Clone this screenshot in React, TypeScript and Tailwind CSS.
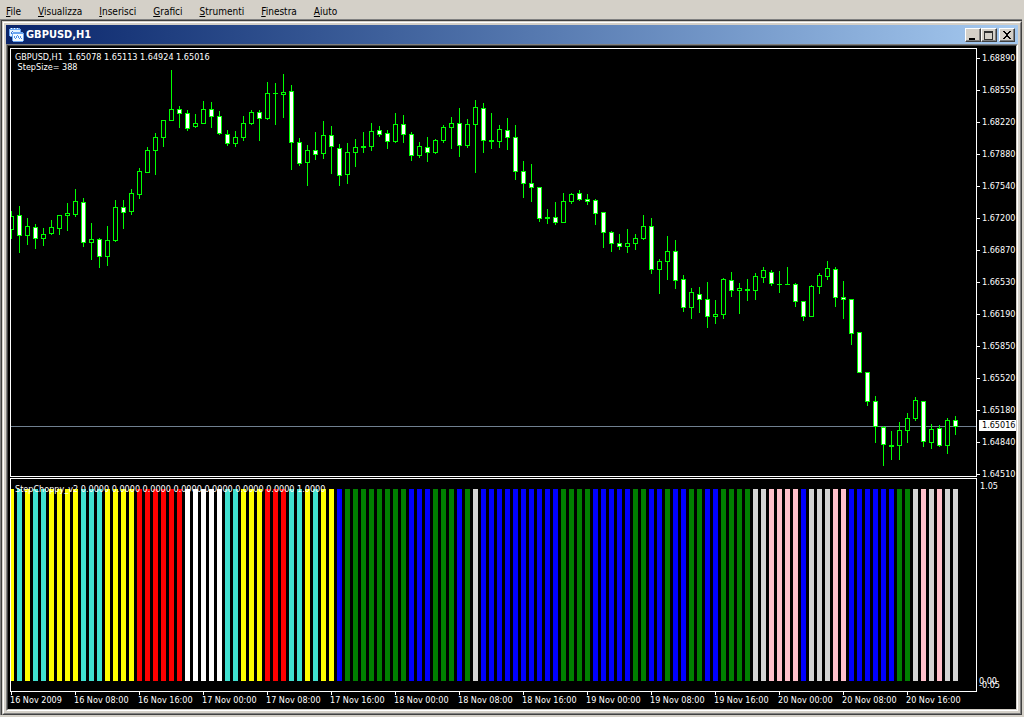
import React from "react";

// [high, open/close top, open/close bottom, low, filled]
type Candle = [number, number, number, number, number];

const candles: Candle[] = [
	[211, 216, 230, 239, 0], [206, 215, 236, 253, 1], [218, 226, 236, 245, 0], [224, 227, 239, 249, 1],
	[228, 234, 239, 246, 0], [220, 227, 234, 235, 0], [215, 215, 229, 235, 0], [203, 213, 216, 231, 0],
	[189, 201, 215, 217, 0], [198, 202, 243, 247, 1], [223, 239, 243, 260, 0], [238, 239, 257, 268, 1],
	[226, 240, 257, 266, 0], [200, 207, 241, 242, 0], [200, 207, 213, 229, 1], [189, 193, 212, 215, 0],
	[168, 171, 195, 199, 0], [147, 150, 173, 173, 0], [133, 137, 151, 175, 0], [120, 120, 138, 147, 0],
	[70, 109, 121, 121, 0], [106, 109, 114, 128, 1], [110, 113, 129, 131, 1], [114, 123, 127, 128, 0],
	[101, 109, 124, 124, 0], [102, 109, 117, 128, 1], [111, 116, 134, 135, 1], [130, 134, 144, 146, 1],
	[131, 137, 144, 147, 0], [116, 123, 138, 141, 0], [110, 112, 124, 125, 0], [110, 112, 119, 141, 1],
	[82, 93, 119, 120, 0], [83, 93, 94, 125, 0], [74, 92, 95, 118, 0], [85, 91, 143, 170, 1],
	[138, 142, 164, 166, 1], [145, 150, 163, 186, 0], [132, 150, 155, 160, 1], [121, 135, 154, 159, 0],
	[126, 135, 147, 174, 1], [144, 148, 176, 186, 1], [143, 152, 175, 184, 0], [139, 147, 153, 167, 0],
	[132, 146, 148, 153, 0], [123, 131, 147, 151, 0], [126, 130, 135, 137, 1], [130, 133, 142, 149, 1],
	[113, 124, 142, 143, 0], [115, 124, 135, 143, 1], [132, 134, 156, 161, 1], [142, 146, 156, 158, 0],
	[137, 147, 153, 162, 1], [139, 140, 153, 154, 0], [125, 127, 141, 143, 0], [117, 123, 128, 149, 0],
	[108, 123, 146, 157, 1], [119, 124, 146, 148, 0], [100, 107, 125, 173, 0], [103, 108, 141, 153, 1],
	[113, 140, 142, 149, 0], [125, 129, 142, 148, 0], [118, 130, 138, 150, 1], [125, 137, 172, 180, 1],
	[161, 171, 184, 198, 1], [164, 183, 188, 202, 1], [187, 187, 219, 222, 1], [209, 217, 219, 224, 0],
	[202, 217, 223, 225, 1], [193, 201, 223, 223, 0], [193, 194, 202, 204, 0], [190, 193, 200, 201, 1],
	[194, 199, 202, 205, 1], [199, 200, 214, 225, 1], [212, 212, 233, 248, 1], [231, 232, 244, 252, 1],
	[234, 243, 247, 250, 1], [229, 243, 247, 253, 0], [234, 238, 244, 250, 0], [215, 226, 239, 240, 0],
	[218, 226, 270, 274, 1], [259, 261, 270, 294, 0], [236, 251, 262, 280, 0], [240, 251, 281, 289, 1],
	[275, 279, 308, 312, 1], [288, 292, 308, 319, 0], [287, 294, 300, 313, 1], [282, 299, 317, 328, 1],
	[300, 314, 317, 324, 0], [278, 279, 315, 319, 0], [272, 280, 291, 297, 1], [283, 288, 291, 314, 0],
	[279, 289, 291, 301, 0], [273, 276, 291, 300, 0], [267, 270, 278, 283, 0], [270, 272, 284, 286, 1],
	[271, 284, 285, 293, 0], [267, 284, 285, 285, 0], [283, 284, 302, 307, 1], [301, 301, 317, 321, 1],
	[285, 286, 317, 317, 0], [273, 275, 287, 294, 0], [261, 268, 277, 280, 0], [267, 269, 298, 307, 1],
	[281, 297, 300, 319, 1], [299, 299, 334, 345, 1], [332, 332, 373, 373, 1], [372, 372, 402, 406, 1],
	[396, 401, 427, 443, 1], [426, 427, 445, 466, 1], [431, 445, 447, 460, 0], [422, 430, 446, 460, 0],
	[413, 418, 431, 443, 0], [397, 400, 419, 421, 0], [401, 401, 442, 447, 1], [424, 429, 443, 449, 0],
	[425, 428, 446, 447, 1], [418, 420, 446, 454, 0], [416, 420, 427, 435, 1],
];

const choppy =
	"YTYTTYYYYTTTYYYYRRRRRRWWWWWTTYYYRRRTTYTYYB" +
	"GGGGGGGGBBBGGGBGSBBBBBBBBBBGGGGBBBBBGGBBG" +
	"BBGGBBGGGGSSPPPPBSSSPPBBBBBBGGSPSPSS";

const barColors: Record<string, string> = {
	Y: "#ffff00",
	T: "#40e0d0",
	R: "#ff0000",
	W: "#ffffff",
	B: "#0000ff",
	G: "#008000",
	S: "#d3d3d3",
	P: "#ffc0cb",
};

const menu = ["File", "Visualizza", "Inserisci", "Grafici", "Strumenti", "Finestra", "Aiuto"];

const prices = [
	"1.68890", "1.68550", "1.68220", "1.67880", "1.67540", "1.67200", "1.66870",
	"1.66530", "1.66190", "1.65850", "1.65520", "1.65180", "1.64840", "1.64510",
];

const times = [
	"16 Nov 2009", "16 Nov 08:00", "16 Nov 16:00", "17 Nov 00:00", "17 Nov 08:00",
	"17 Nov 16:00", "18 Nov 00:00", "18 Nov 08:00", "18 Nov 16:00", "19 Nov 00:00",
	"19 Nov 08:00", "19 Nov 16:00", "20 Nov 00:00", "20 Nov 08:00", "20 Nov 16:00",
];

const MenuBar = () => (
	<nav className="flex h-[19px] items-center gap-[17px] pl-[6px] pt-1 text-[10px] leading-4 text-black">
		{menu.map((item) => (
			<button key={item} type="button" className="whitespace-nowrap">
				<span className="underline underline-offset-1">{item[0]}</span>
				{item.slice(1)}
			</button>
		))}
	</nav>
);

const ChartIcon = () => (
	<svg width="16" height="16" viewBox="0 0 16 16" shapeRendering="crispEdges">
		<path d="M1 1h10v9H1z" fill="#e8f4ff" />
		<path d="M1 1h10v2H1zM0 2h1v7H0zM11 2h1v4h-1zM1 9h3v1H1z" fill="#6ba5f0" />
		<path d="M2 1h1v1H2zM5 1h1v1H5zM8 1h1v1H8z" fill="#fff" />
		<path d="M2 5h1v2H2zM3 4h1v1H3zM4 5h1v2H4z" fill="#3c78d8" />
		<path d="M4 6h10v8H4z" fill="#f4faff" />
		<path d="M4 5h10v2H4zM3 6h1v8H3zM14 6h1v8h-1zM4 14h10v1H4z" fill="#6ba5f0" />
		<path d="M5 9h1v2H5zM6 11h1v1H6zM7 9h1v2H7zM8 8h1v1H8zM9 9h1v2H9zM10 11h1v1h-1zM11 9h1v2h-1zM12 11h1v1h-1z" fill="#4f8fe8" />
	</svg>
);

const captionButton =
	"flex h-[14px] w-4 items-center justify-center border border-t-white border-l-white border-r-[#404040] border-b-[#404040] bg-[#d4d0c8] shadow-[inset_-1px_-1px_0_#808080]";

const TitleBar = () => (
	<header className="flex h-[19px] items-center bg-linear-to-r from-[#0a246a] to-[#a6caf0] pl-[3px] pr-[3px]">
		<ChartIcon />
		<h1 className="ml-px flex-1 text-[11px] font-bold leading-4 text-white">GBPUSD,H1</h1>
		<button type="button" aria-label="Minimize" className={captionButton}>
			<svg width="12" height="10" shapeRendering="crispEdges">
				<path d="M2 8h6v2H2z" />
			</svg>
		</button>
		<button type="button" aria-label="Maximize" className={captionButton}>
			<svg width="12" height="10" shapeRendering="crispEdges">
				<path d="M1 1h9v9H1zM2 3v6h7V3z" fill="#303030" fillRule="evenodd" />
			</svg>
		</button>
		<button type="button" aria-label="Close" className={`${captionButton} ml-[2px]`}>
			<svg width="12" height="10" shapeRendering="crispEdges">
				<path d="M2 1h2v1H2zM8 1h2v1H8zM3 2h2v1H3zM7 2h2v1H7zM4 3h4v1H4zM5 4h2v2H5zM4 6h4v1H4zM3 7h2v1H3zM7 7h2v1H7zM2 8h2v1H2zM8 8h2v1H8z" />
			</svg>
		</button>
	</header>
);

// the plot area of the price pane starts at 11,49
const PriceChart = () => (
	<svg className="block h-full w-full" shapeRendering="crispEdges" role="img" aria-label="GBPUSD H1 candles">
		<rect x="0" y="377" width="100%" height="1" fill="#708090" />
		{candles.map(([high, top, bottom, low, filled], i) => {
			const x = i * 8;
			return (
				<g key={i} fill="#00ff00">
					<rect x={x} y={high - 49} width="1" height={low - high} />
					<rect x={x - 2} y={top - 49} width="5" height={bottom - top} />
					{bottom - top > 2 && (
						<rect x={x - 1} y={top - 48} width="3" height={bottom - top - 2} fill={filled ? "#fff" : "#000"} />
					)}
				</g>
			);
		})}
	</svg>
);

const ChoppyChart = () => (
	<svg className="block h-full w-full" shapeRendering="crispEdges" role="img" aria-label="StepChoppy histogram">
		{choppy.split("").map((c, i) => (
			<rect key={i} x={i * 8 - 2} y="10" width="5" height="192" fill={barColors[c]} />
		))}
	</svg>
);

const App = () => (
	<div className="bg-[#d4d0c8] pb-[2px] font-['DejaVu_Sans_Condensed','DejaVu_Sans',sans-serif]">
		<MenuBar />
		<div className="mr-[2px] border-l border-t border-[#808080]">
			<div className="border-l border-t border-[#404040]">
				<main className="border border-b-[#404040] border-l-[#d4d0c8] border-r-[#404040] border-t-[#d4d0c8]">
					<div className="border border-b-[#808080] border-l-white border-r-[#808080] border-t-white p-[2px]">
						<TitleBar />
						<div className="border border-b-white border-l-[#808080] border-r-white border-t-[#808080]">
							<div className="border border-b-[#d4d0c8] border-l-[#404040] border-r-[#d4d0c8] border-t-[#404040] bg-black pl-[2px] pt-[2px] text-[9px] leading-[10px] text-white">
								<section className="flex h-[429px]">
									<div className="relative min-w-0 flex-1 overflow-hidden border border-white">
										<PriceChart />
										<p className="absolute left-1 top-[3px] whitespace-pre">
											{"GBPUSD,H1  1.65078 1.65113 1.64924 1.65016\n StepSize= 388"}
										</p>
									</div>
									<div className="relative w-[39px] shrink-0">
										<ul className="-mt-[6px]">
											{prices.map((price) => (
												<li key={price} className="flex h-8 items-center gap-[2px]">
													<span className="h-px w-[3px] bg-white" />
													{price}
												</li>
											))}
										</ul>
										<span className="absolute left-[2px] right-0 top-[372px] h-[11px] bg-white pl-[3px] text-black">1.65016</span>
									</div>
								</section>
								<section className="mt-px flex h-[214px]">
									<div className="relative min-w-0 flex-1 overflow-hidden border border-white">
										<ChoppyChart />
										<p className="absolute left-1 top-[5px] whitespace-nowrap">
											StepChoppy_v2 0.0000 0.0000 0.0000 0.0000 0.0000 0.0000 0.0000 1.0000
										</p>
									</div>
									<div className="relative w-[39px] shrink-0 pl-[3px] pt-[3px]">
										1.05
										<span className="absolute left-[2px] top-[198px]">0.00</span>
										<span className="absolute left-[2px] top-[202px]">-0.05</span>
									</div>
								</section>
								<ol className="flex h-[17px] overflow-hidden pl-px">
									{times.map((time) => (
										<li key={time} className="w-16 shrink-0 whitespace-nowrap">
											<span className="block h-[3px] w-px bg-white" />
											<span className="-ml-px block">{time}</span>
										</li>
									))}
								</ol>
							</div>
						</div>
					</div>
				</main>
			</div>
		</div>
	</div>
);

export default App;
